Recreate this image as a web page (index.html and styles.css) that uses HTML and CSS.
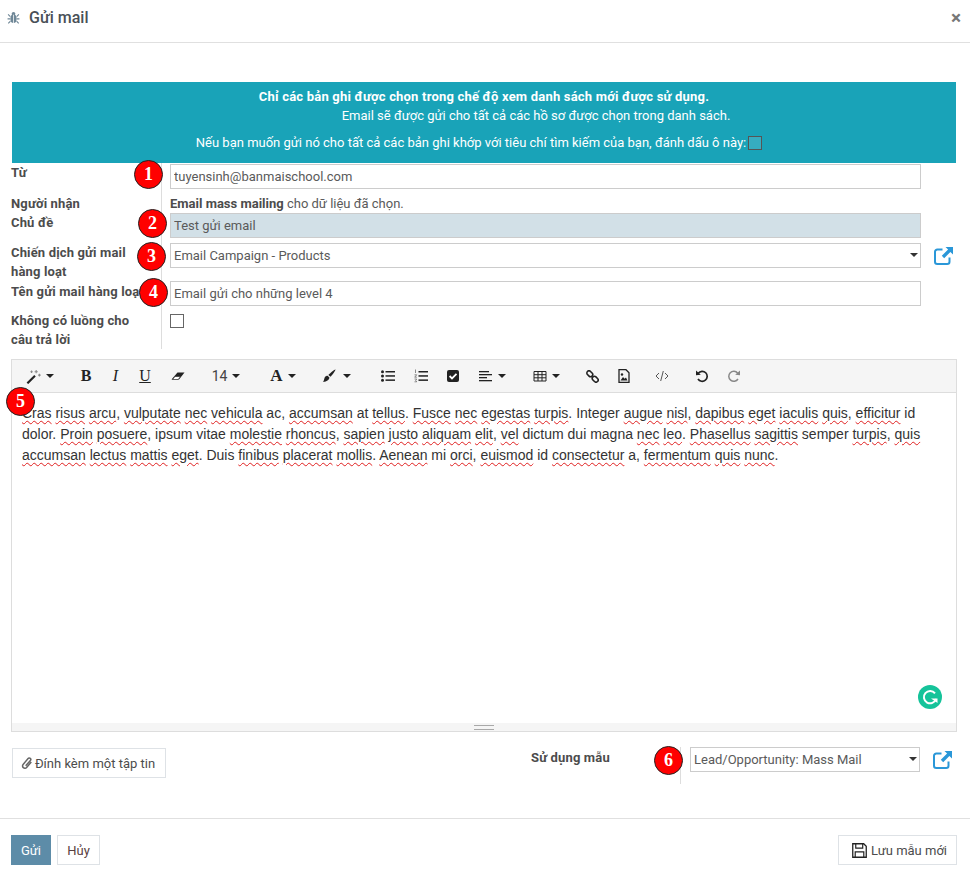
FILE: index.html
```html
<!DOCTYPE html>
<html lang="vi">
<head>
<meta charset="utf-8">
<title>Gửi mail</title>
<link rel="stylesheet" href="styles.css">
</head>
<body>
<div class="dialog">
  <header class="head">
    <svg class="bug" viewBox="0 0 14 14"><g fill="#6f8797"><ellipse cx="7" cy="8.400" rx="3.400" ry="4.600"/><circle cx="7" cy="3" r="2"/></g><path d="M3.600 6 1.200 3.600M3.400 8.500H.6M3.700 11 1.400 13.400M10.400 6l2.400-2.400M10.600 8.500h2.800M10.300 11l2.300 2.400" stroke="#6f8797" stroke-width="1.200" fill="none"/><path d="M7 4v9" stroke="#fff" stroke-width=".8"/></svg>
    <h1 class="title">Gửi mail</h1>
    <span class="close">×</span>
  </header>

  <section class="alert">
    <p class="alert-strong">Chỉ các bản ghi được chọn trong chế độ xem danh sách mới được sử dụng.</p>
    <p class="alert-sub">Email sẽ được gửi cho tất cả các hồ sơ được chọn trong danh sách.</p>
    <p class="alert-check">Nếu bạn muốn gửi nó cho tất cả các bản ghi khớp với tiêu chí tìm kiếm của bạn, đánh dấu ô này:<input type="checkbox" class="check-alert"></p>
  </section>

  <form class="form">
    <div class="lbl r1">Từ</div>
    <div class="val r1"><input class="field f-top" value="tuyensinh@banmaischool.com"></div>

    <div class="lbl r2">Người nhận</div>
    <div class="val r2 rcpt"><b>Email mass mailing</b> cho dữ liệu đã chọn.</div>

    <div class="lbl r3">Chủ đề</div>
    <div class="val r3"><input class="field subject" value="Test gửi email"></div>

    <div class="lbl r4">Chiến dịch gửi mail hàng loạt</div>
    <div class="val r4 with-link">
      <div class="sel"><select class="field"><option>Email Campaign - Products</option></select></div>
      <svg class="ext" viewBox="0 0 20 20"><path d="M16.500 11.500v4.200a2.300 2.300 0 0 1-2.300 2.300H4.300A2.300 2.300 0 0 1 2 15.700V5.800a2.300 2.300 0 0 1 2.300-2.300h5.200" fill="none" stroke="#2a97d8" stroke-width="2"/><path d="M12.500 1H20v7.500l-2.600-2.600-6.200 6.300-2.400-2.400 6.300-6.200z" fill="#2a97d8"/></svg>
    </div>

    <div class="lbl r5 name-lbl">Tên gửi mail hàng loạt</div>
    <div class="val r5"><input class="field f-name" value="Email gửi cho những level 4"></div>

    <div class="lbl r6">Không có luồng cho câu trả lời</div>
    <div class="val r6"><input type="checkbox" class="check-form"></div>
  </form>

  <section class="editor">
    <div class="toolbar">
      <span class="tb w-wand"><svg class="ic ic-wand" viewBox="0 0 14 14"><path d="M.6 12.700 7.700 5.600l1.400 1.400L2 14.100z" fill="#222"/><path d="M9.500 1v3M8 2.500h3M12.500 4.500v2.400M11.300 5.700h2.400M5.200 1.500v2.200M4.100 2.600h2.200" stroke="#888" stroke-width="1"/></svg><i class="caret"></i></span>
      <span class="tb w-b serif bold">B</span>
      <span class="tb w-i serif ital">I</span>
      <span class="tb w-u serif under">U</span>
      <span class="tb w-e"><svg class="ic" viewBox="0 0 14 14"><path d="M.5 10.500 6.500 3.500h7L8 10.500z" fill="#222"/><path d="M1.500 10.500 4 7.500h5.500L7.200 10.500z" fill="#fff" stroke="#222" stroke-width=".6"/></svg></span>
      <span class="tb w-size">14<i class="caret"></i></span>
      <span class="tb w-a serif bold big">A<i class="caret"></i></span>
      <span class="tb w-brush"><svg class="ic ic-l" viewBox="0 0 14 14"><path d="M13.500.5c.4.400-3.300 5.800-5 7.300L6.300 5.900C8 4.200 13 .1 13.500.5z" fill="#222"/><path d="M5.600 6.700l1.800 1.800C7.200 11.200 4 13 .8 12.700c1.500-1 1-2.500 2-4.500.6-1 1.700-1.500 2.800-1.500z" fill="#222"/></svg><i class="caret caret-wide"></i></span>
      <span class="tb w-ul"><svg class="ic" viewBox="0 0 14 14"><g fill="#222"><circle cx="1.500" cy="2.800" r="1.500"/><circle cx="1.500" cy="7" r="1.500"/><circle cx="1.500" cy="11.200" r="1.500"/><rect x="4.500" y="2" width="9.500" height="1.500"/><rect x="4.500" y="6.200" width="9.500" height="1.500"/><rect x="4.500" y="10.400" width="9.500" height="1.500"/></g></svg></span>
      <span class="tb w-ol"><svg class="ic" viewBox="0 0 14 14"><g fill="#222"><rect x="4.500" y="2" width="9.500" height="1.500"/><rect x="4.500" y="6.200" width="9.500" height="1.500"/><rect x="4.500" y="10.400" width="9.500" height="1.500"/></g><path d="M1.500.5v3.500M.5 5.800h2.200l-2 2.400h2.200M.5 10h2.200l-1 1.400 1 1.400H.5" fill="none" stroke="#444" stroke-width=".6"/></svg></span>
      <span class="tb w-chk"><svg class="ic" viewBox="0 0 14 14"><rect x="1" y="1" width="12" height="12" rx="2" fill="#222"/><path d="m3.600 7 2.400 2.400 4.500-4.500" fill="none" stroke="#fff" stroke-width="1.800"/></svg></span>
      <span class="tb w-align"><svg class="ic" viewBox="0 0 14 14"><g fill="#222"><rect y="2" width="10" height="1.300"/><rect y="5" width="13" height="1.300"/><rect y="8" width="8" height="1.300"/><rect y="11" width="13" height="1.300"/></g></svg><i class="caret"></i></span>
      <span class="tb w-table"><svg class="ic" viewBox="0 0 14 14"><path d="M1 2.500h12v9.500H1zM1 5.700h12M1 8.800h12M5 2.500V12M9 2.500V12" fill="none" stroke="#222" stroke-width="1"/></svg><i class="caret"></i></span>
      <span class="tb w-link"><svg class="ic ic-s" viewBox="0 0 14 14"><g fill="none" stroke="#222" stroke-width="1.700"><rect x=".6" y="1.700" width="7" height="4.600" rx="2.300" transform="rotate(45 4 4)"/><rect x="6.400" y="7.700" width="7" height="4.600" rx="2.300" transform="rotate(45 10 10)"/></g></svg></span>
      <span class="tb w-img"><svg class="ic" viewBox="0 0 14 14"><path d="M2 .7h7l3 3v9.600H2z" fill="none" stroke="#222" stroke-width="1.300"/><path d="M3.500 11.500 6 8l1.500 1.800L9 8.500l1.500 3z" fill="#222"/><circle cx="5" cy="5.500" r="1.200" fill="#222"/></svg></span>
      <span class="tb w-code"><svg class="ic" viewBox="0 0 14 14"><path d="M4 4 1 7l3 3M10 4l3 3-3 3M8.300 2 5.700 12" fill="none" stroke="#555" stroke-width="1"/></svg></span>
      <span class="tb w-undo"><svg class="ic" viewBox="0 0 14 14"><path d="M3.300 4.200A5 5 0 1 1 3 10" fill="none" stroke="#222" stroke-width="1.700"/><path d="M1 1.500 5.800 5.800 1 6.200z" fill="#222"/></svg></span>
      <span class="tb w-redo"><svg class="ic" viewBox="0 0 14 14"><path d="M10.700 4.200A5 5 0 1 0 11 10" fill="none" stroke="#888" stroke-width="1.500"/><path d="M13 1.500 8.200 5.800 13 6.200z" fill="#888"/></svg></span>
    </div>
    <div class="content">
      <p class="copy"><u>Cras</u> <u>risus</u> <u>arcu</u>, <u>vulputate</u> <u>nec</u> <u>vehicula</u> ac, <u>accumsan</u> at <u>tellus</u>. <u>Fusce</u> <u>nec</u> <u>egestas</u> <u>turpis</u>. Integer <u>augue</u> <u>nisl</u>, <u>dapibus</u> <u>eget</u> <u>iaculis</u> <u>quis</u>, <u>efficitur</u> id dolor. <u>Proin</u> <u>posuere</u>, ipsum vitae <u>molestie</u> <u>rhoncus</u>, <u>sapien</u> <u>justo</u> <u>aliquam</u> <u>elit</u>, <u>vel</u> dictum dui magna <u>nec</u> <u>leo</u>. <u>Phasellus</u> <u>sagittis</u> semper <u>turpis</u>, <u>quis</u> <u>accumsan</u> <u>lectus</u> <u>mattis</u> <u>eget</u>. Duis <u>finibus</u> <u>placerat</u> <u>mollis</u>. <u>Aenean</u> mi <u>orci</u>, <u>euismod</u> id <u>consectetur</u> a, <u>fermentum</u> <u>quis</u> <u>nunc</u>.</p>
      <svg class="gram" viewBox="0 0 24 24"><circle cx="12" cy="12" r="12" fill="#15c39a"/><path d="M17 8.300a6.200 6.200 0 1 0 1 5.700" fill="none" stroke="#fff" stroke-width="2"/><path d="M13 13.500h6.500V18z" fill="#fff"/></svg>
    </div>
    <div class="resize"><i></i></div>
  </section>

  <section class="attach-row">
    <button type="button" class="btn attach"><svg class="clip" viewBox="0 0 12 14"><path d="M10.300 6.500 5.600 11.900a2.300 2.300 0 0 1-3.500-3l5-5.900a1.500 1.500 0 0 1 2.300 2L4.700 10.300" fill="none" stroke="#666" stroke-width="1.500" transform="translate(0 -.5)"/></svg>Đính kèm một tập tin</button>
    <div class="tpl-label">Sử dụng mẫu</div>
    <div class="tpl-val with-link">
      <div class="sel"><select class="field"><option>Lead/Opportunity: Mass Mail</option></select></div>
      <svg class="ext" viewBox="0 0 20 20"><path d="M16.500 11.500v4.200a2.300 2.300 0 0 1-2.300 2.300H4.300A2.300 2.300 0 0 1 2 15.700V5.800a2.300 2.300 0 0 1 2.300-2.300h5.200" fill="none" stroke="#2a97d8" stroke-width="2"/><path d="M12.500 1H20v7.500l-2.600-2.600-6.200 6.300-2.400-2.400 6.300-6.200z" fill="#2a97d8"/></svg>
    </div>
  </section>

  <footer class="foot">
    <button type="button" class="btn send">Gửi</button>
    <button type="button" class="btn cancel">Hủy</button>
    <button type="button" class="btn save"><svg class="floppy" viewBox="0 0 14 14"><path d="M.7.7h10.200l2.400 2.400v10.200H.7z" fill="#fff" stroke="#222" stroke-width="1.200"/><path d="M3.500 1v3.800h6.500V1M3 13V8.300h8V13" fill="none" stroke="#222" stroke-width="1.100"/></svg>Lưu mẫu mới</button>
  </footer>

  <span class="badge b1">1</span>
  <span class="badge b2">2</span>
  <span class="badge b3">3</span>
  <span class="badge b4">4</span>
  <span class="badge b5">5</span>
  <span class="badge b6">6</span>
</div>
</body>
</html>
```
FILE: styles.css
```css
* { box-sizing: border-box; }
html, body { margin: 0; padding: 0; background: #fff; }
body { font-family: Roboto, "Liberation Sans", sans-serif; font-size: 13px; color: #5a5a5a; }
.dialog { position: relative; width: 970px; height: 884px; overflow: hidden; }

.head { display: flex; align-items: center; height: 43px; padding: 0 9px 7px 7px; border-bottom: 1px solid #e0e0e0; }
.bug { width: 13px; height: 13px; }
.title { flex: 1; margin: 0 0 0 9px; font-size: 16px; font-weight: 500; color: #495057; line-height: 18px; }
.close { font-size: 19px; font-weight: 700; line-height: 18px; color: #777; }

.alert { margin: 39px 14px 0 12px; height: 81px; padding-top: 5px; background: #19a3b8; color: #fff; text-align: center; line-height: 19px; }
.alert p { margin: 0; }
.alert-strong { font-weight: 700; letter-spacing: .2px; }
.alert-sub { padding-left: 104px; }
.alert-check { display: flex; justify-content: center; align-items: center; margin-top: 8px !important; padding-right: 10px; }
.check-alert { appearance: none; width: 14px; height: 14px; margin: 0 0 0 2px; border: 1px solid #555; background: #36adc0; }

.form { display: grid; grid-template-columns: 151px 759px; grid-template-rows: 31px 19px 30px 38px 30px 38px; margin-left: 11px; line-height: 19px; }
.lbl { font-weight: 700; color: #4c4c4c; border-right: 1px solid #ddd; padding-right: 20px; letter-spacing: .15px; }
.val { padding-left: 8px; min-width: 0; }
.name-lbl { white-space: nowrap; overflow: hidden; padding-right: 0; padding-top: 1px; }
.rcpt { white-space: nowrap; }
.rcpt b { font-weight: 700; color: #4c4c4c; }
.field { display: block; width: 100%; height: 25px; padding: 0 3px; border: 1px solid #ccc; border-radius: 0; background: #fff; font: 13px Roboto, sans-serif; color: #5a5a5a; outline: 0; appearance: none; }
.f-top { margin-top: 1px; }
.subject { background: #d2e0e7; }
.with-link { position: relative; }
.sel { position: relative; }
.sel::after { content: ""; position: absolute; right: 3px; top: 10px; border: 4px solid transparent; border-top-color: #333; border-bottom: 0; }
.ext { position: absolute; left: 771px; top: 3px; width: 20px; height: 20px; }
.check-form { appearance: none; display: block; width: 14px; height: 14px; margin: 3px 0 0; border: 1px solid #666; background: #fff; }

.editor { margin: 10px 13px 0 11px; height: 373px; border: 1px solid #ddd; display: flex; flex-direction: column; }
.toolbar { display: flex; align-items: center; height: 33px; padding-left: 11px; background: #f5f5f5; border-bottom: 1px solid #ddd; color: #222; }
.tb { display: flex; align-items: center; justify-content: center; height: 32px; font-size: 14px; }
.serif { font-family: "Liberation Serif", serif; font-size: 16px; }
.bold { font-weight: 700; }
.ital { font-style: italic; }
.under { text-decoration: underline; }
.big { font-size: 17px; }
.ic { width: 14px; height: 14px; }
.ic-wand { width: 15px; height: 15px; margin-left: -5px; }
.ic-s { width: 13px; height: 13px; }
.caret { display: inline-block; margin-left: 5px; border: 4px solid transparent; border-top-color: #222; border-bottom: 0; }
.caret-wide { margin-left: 7px; }
.w-wand { width: 38px; margin-right: 10px; }
.w-b { width: 30px; }
.w-i { width: 29px; }
.w-u { width: 30px; }
.w-e { width: 36px; }
.w-size { width: 46px; margin-left: 7px; color: #444; }
.w-a { width: 44px; margin-left: 12px; }
.w-brush { width: 46px; margin-left: 8px; }
.w-ul { width: 36px; margin-left: 11px; }
.w-ol { width: 32px; margin-left: -1px; }
.w-chk { width: 32px; }
.w-align { width: 46px; }
.w-table { width: 42px; margin-left: 10px; }
.w-link { width: 32px; margin-left: 9px; }
.w-img { width: 32px; }
.w-code { width: 32px; margin-left: 6px; }
.w-undo { width: 32px; margin-left: 8px; }
.w-redo { width: 32px; }

.content { position: relative; flex: 1; padding: 10px 10px 0; }
.copy { margin: 0; font: 14px/21px "Liberation Sans", Arial, sans-serif; color: #333; }
.copy u { text-decoration: underline wavy #e02020; text-decoration-thickness: 1px; text-underline-offset: 2px; }
.gram { position: absolute; right: 14px; bottom: 14px; width: 24px; height: 24px; }
.resize { display: flex; align-items: center; justify-content: center; height: 8px; background: #f5f5f5; }
.resize i { width: 20px; height: 5px; border-top: 1px solid #a9a9a9; border-bottom: 1px solid #a9a9a9; position: relative; }

.attach-row { display: flex; align-items: flex-start; margin: 16px 0 0 12px; height: 70px; }
.btn { height: 30px; padding: 0; border: 1px solid #dee2e6; background: #fff; font: 13px Roboto, sans-serif; color: #4c4c4c; border-width: 1px; }
.attach { display: flex; align-items: center; justify-content: center; width: 154px; padding-right: 2px; }
.clip { width: 12px; height: 14px; margin-right: 2px; }
.tpl-label { width: 150px; margin-left: 365px; padding-right: 0; font-weight: 700; line-height: 19px; text-align: left; letter-spacing: .15px; color: #4c4c4c; }
.tpl-val { width: 240px; height: 37px; margin-left: -1px; margin-top: -1px; padding-left: 9px; border-left: 1px solid #ddd; }
.tpl-val .ext { left: 251px; top: 3px; }

.foot { display: flex; align-items: flex-start; height: 66px; padding: 16px 13px 0 11px; border-top: 1px solid #e0e0e0; }
.send { width: 40px; background: #5d8ca8; border-color: #5d8ca8; color: #fff; }
.cancel { width: 43px; margin-left: 6px; color: #5a4040; }
.save { display: flex; align-items: center; justify-content: center; width: 119px; margin-left: auto; padding-left: 4px; }
.floppy { width: 15px; height: 15px; margin-right: 4px; }

.badge { position: absolute; width: 29px; height: 29px; border: 1px solid #222; border-radius: 50%; background: #f00; color: #fff; font: 700 18px/27px "Liberation Serif", serif; text-align: center; }
.b1 { left: 134px; top: 160px; }
.b2 { left: 138px; top: 209px; }
.b3 { left: 137px; top: 242px; }
.b4 { left: 139px; top: 278px; }
.b5 { left: 6px; top: 387px; }
.b6 { left: 654px; top: 746px; }
```
